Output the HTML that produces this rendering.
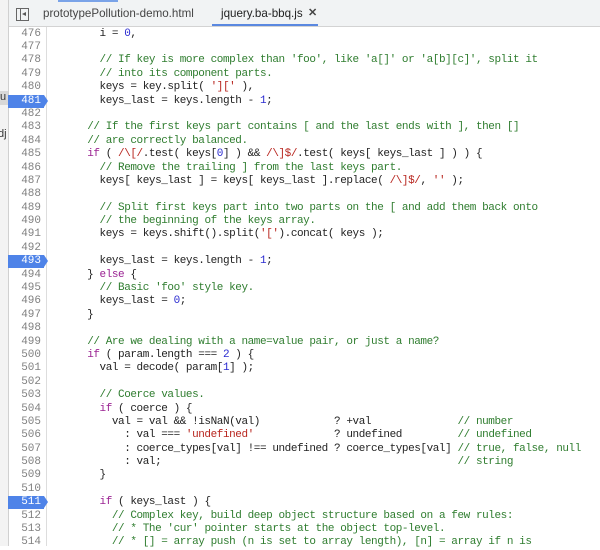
<!DOCTYPE html>
<html><head><meta charset="utf-8"><style>
html,body{margin:0;padding:0;width:600px;height:546px;overflow:hidden;background:#fff}
.left{position:absolute;left:0;top:0;width:8px;height:546px;background:#f3f3f3;border-right:1px solid #d0d0d0;font:11px "Liberation Sans",sans-serif;color:#333;overflow:hidden}
.tabs{position:absolute;left:9px;top:0;width:591px;height:26px;background:#f1f3f4;border-bottom:1px solid #d3d3d3;font:11.6px "Liberation Sans",sans-serif;color:#444}
.topline{position:absolute;left:49px;top:0;width:60px;height:2px;background:#7aa3e8}
.icon{position:absolute;left:7px;top:8px;width:11px;height:11px;border:1px solid #666}
.icon:before{content:"";position:absolute;left:3px;top:0;width:1px;height:11px;background:#666}
.icon:after{content:"";position:absolute;left:5px;top:3px;border-right:4px solid #555;border-top:2.5px solid transparent;border-bottom:2.5px solid transparent}
.t1{position:absolute;left:34px;top:7px}
.t2{position:absolute;left:203px;top:0;width:106px;height:24px;border-bottom:2px solid #5a88e0}
.t2 span{position:absolute;left:9px;top:7px;color:#222}
.t2 b{position:absolute;left:96px;top:6px;font-size:11px}
.gut{position:absolute;left:9px;top:27px;width:37px;height:519px;border-right:1px solid #ddd}
.code{position:absolute;left:0;top:27.6px;width:600px;font:11px/13.4px "Liberation Mono",monospace;letter-spacing:-0.43px;color:#222}
.r{position:relative;height:13.4px;white-space:pre}
.n{position:absolute;left:9px;width:32px;text-align:right;color:#808080;letter-spacing:0}
.bp .n{color:#fff}
.bp:before{content:"";position:absolute;left:8px;top:0;width:36px;height:13px;background:#4e83e8}
.bp:after{content:"";position:absolute;left:44px;top:0;border-left:4px solid #4e83e8;border-top:6.5px solid transparent;border-bottom:6.5px solid transparent}
.c{position:absolute;left:62.5px}
.cm{color:#2f7d2f}.k{color:#9b2393}.s{color:#b8261f}.m{color:#2a2ad0}
</style></head><body>
<div class="left"><div style="position:absolute;top:91px;left:0;width:8px;height:14px;background:#d8d8d8">u</div><div style="position:absolute;top:128px;left:-2px">dj</div></div>
<div class="tabs"><div class="topline"></div><div class="icon"></div><span class="t1">prototypePollution-demo.html</span><div class="t2"><span>jquery.ba-bbq.js</span><b>✕</b></div></div>
<div class="gut"></div>
<div class="code">
<div class="r"><span class="n">476</span><span class="c">      i = <span class="m">0</span>,</span></div>
<div class="r"><span class="n">477</span></div>
<div class="r"><span class="n">478</span><span class="c">      <span class="cm">// If key is more complex than 'foo', like 'a[]' or 'a[b][c]', split it</span></span></div>
<div class="r"><span class="n">479</span><span class="c">      <span class="cm">// into its component parts.</span></span></div>
<div class="r"><span class="n">480</span><span class="c">      keys = key.split( <span class="s">']['</span> ),</span></div>
<div class="r bp"><span class="n">481</span><span class="c">      keys_last = keys.length - <span class="m">1</span>;</span></div>
<div class="r"><span class="n">482</span></div>
<div class="r"><span class="n">483</span><span class="c">    <span class="cm">// If the first keys part contains [ and the last ends with ], then []</span></span></div>
<div class="r"><span class="n">484</span><span class="c">    <span class="cm">// are correctly balanced.</span></span></div>
<div class="r"><span class="n">485</span><span class="c">    <span class="k">if</span> ( <span class="s">/\[/</span>.test( keys[<span class="m">0</span>] ) &amp;&amp; <span class="s">/\]$/</span>.test( keys[ keys_last ] ) ) {</span></div>
<div class="r"><span class="n">486</span><span class="c">      <span class="cm">// Remove the trailing ] from the last keys part.</span></span></div>
<div class="r"><span class="n">487</span><span class="c">      keys[ keys_last ] = keys[ keys_last ].replace( <span class="s">/\]$/</span>, <span class="s">''</span> );</span></div>
<div class="r"><span class="n">488</span></div>
<div class="r"><span class="n">489</span><span class="c">      <span class="cm">// Split first keys part into two parts on the [ and add them back onto</span></span></div>
<div class="r"><span class="n">490</span><span class="c">      <span class="cm">// the beginning of the keys array.</span></span></div>
<div class="r"><span class="n">491</span><span class="c">      keys = keys.shift().split(<span class="s">'['</span>).concat( keys );</span></div>
<div class="r"><span class="n">492</span></div>
<div class="r bp"><span class="n">493</span><span class="c">      keys_last = keys.length - <span class="m">1</span>;</span></div>
<div class="r"><span class="n">494</span><span class="c">    } <span class="k">else</span> {</span></div>
<div class="r"><span class="n">495</span><span class="c">      <span class="cm">// Basic 'foo' style key.</span></span></div>
<div class="r"><span class="n">496</span><span class="c">      keys_last = <span class="m">0</span>;</span></div>
<div class="r"><span class="n">497</span><span class="c">    }</span></div>
<div class="r"><span class="n">498</span></div>
<div class="r"><span class="n">499</span><span class="c">    <span class="cm">// Are we dealing with a name=value pair, or just a name?</span></span></div>
<div class="r"><span class="n">500</span><span class="c">    <span class="k">if</span> ( param.length === <span class="m">2</span> ) {</span></div>
<div class="r"><span class="n">501</span><span class="c">      val = decode( param[<span class="m">1</span>] );</span></div>
<div class="r"><span class="n">502</span></div>
<div class="r"><span class="n">503</span><span class="c">      <span class="cm">// Coerce values.</span></span></div>
<div class="r"><span class="n">504</span><span class="c">      <span class="k">if</span> ( coerce ) {</span></div>
<div class="r"><span class="n">505</span><span class="c">        val = val &amp;&amp; !isNaN(val)            ? +val              <span class="cm">// number</span></span></div>
<div class="r"><span class="n">506</span><span class="c">          : val === <span class="s">'undefined'</span>             ? undefined         <span class="cm">// undefined</span></span></div>
<div class="r"><span class="n">507</span><span class="c">          : coerce_types[val] !== undefined ? coerce_types[val] <span class="cm">// true, false, null</span></span></div>
<div class="r"><span class="n">508</span><span class="c">          : val;                                                <span class="cm">// string</span></span></div>
<div class="r"><span class="n">509</span><span class="c">      }</span></div>
<div class="r"><span class="n">510</span></div>
<div class="r bp"><span class="n">511</span><span class="c">      <span class="k">if</span> ( keys_last ) {</span></div>
<div class="r"><span class="n">512</span><span class="c">        <span class="cm">// Complex key, build deep object structure based on a few rules:</span></span></div>
<div class="r"><span class="n">513</span><span class="c">        <span class="cm">// * The 'cur' pointer starts at the object top-level.</span></span></div>
<div class="r"><span class="n">514</span><span class="c">        <span class="cm">// * [] = array push (n is set to array length), [n] = array if n is</span></span></div>
</div>
</body></html>
